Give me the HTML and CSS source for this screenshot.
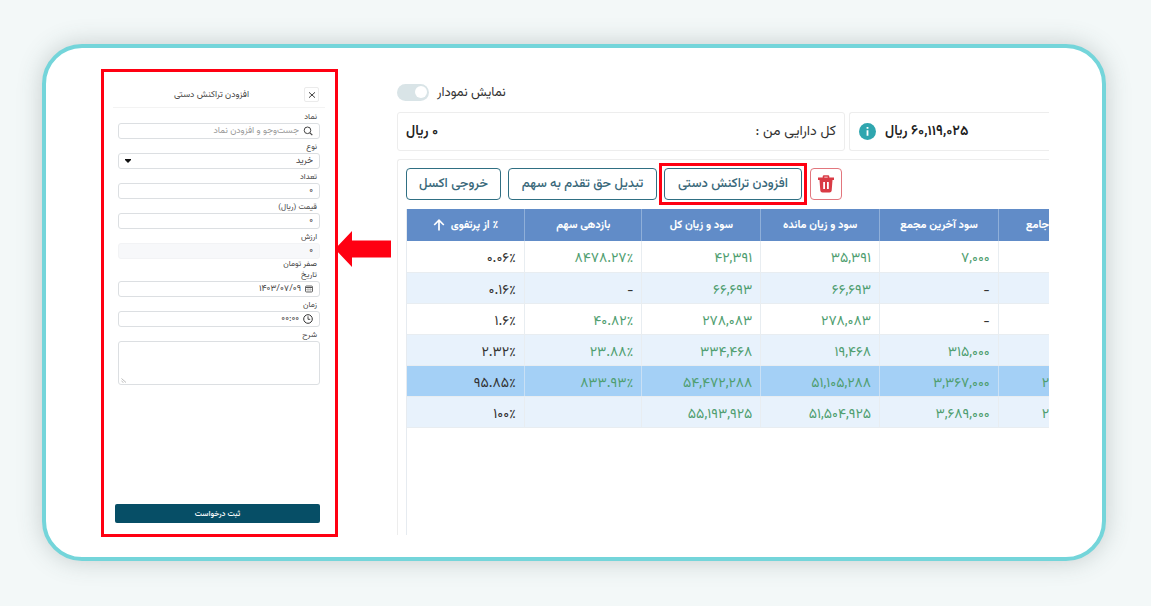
FILE: index.html
```html
<!DOCTYPE html>
<html lang="fa">
<head>
<meta charset="utf-8">
<meta name="viewport" content="width=device-width, initial-scale=1">
<title>افزودن تراکنش دستی</title>
<link rel="stylesheet" href="styles.css">
</head>
<body>
<main class="card">
  <form class="entry" dir="rtl">
    <header class="entry-head">
      <button class="close" type="button" aria-label="بستن">
        <svg viewBox="0 0 8 8" width="8" height="8"><path d="M1 1.300 7 6.700M7 1.300 1 6.700" stroke="#444" stroke-width="1" fill="none"/></svg>
      </button>
      <h1 class="entry-title">افزودن تراکنش دستی</h1>
    </header>
    <div class="fields">
      <div class="field">
        <label for="symbol">نماد</label>
        <div class="control">
          <svg viewBox="0 0 10 10" width="10" height="10"><circle cx="4.500" cy="4.300" r="3.300" fill="none" stroke="#444" stroke-width="1"/><path d="M7 6.800 9.300 9.200" stroke="#444" stroke-width="1.200"/></svg>
          <input id="symbol" type="text" placeholder="جست‌وجو و افزودن نماد">
        </div>
      </div>
      <div class="field">
        <label for="kind">نوع</label>
        <div class="control">
          <select id="kind"><option>خرید</option></select>
          <svg viewBox="0 0 6 4" width="6" height="4"><path d="M0 0H6V1L3 4 0 1Z" fill="#111"/></svg>
        </div>
      </div>
      <div class="field">
        <label for="count">تعداد</label>
        <div class="control"><input id="count" type="text" value="۰"></div>
      </div>
      <div class="field">
        <label for="price">قیمت (ریال)</label>
        <div class="control"><input id="price" type="text" value="۰"></div>
      </div>
      <div class="field">
        <label for="value">ارزش</label>
        <div class="control readonly"><input id="value" type="text" value="۰" readonly></div>
        <p class="hint">صفر تومان</p>
      </div>
      <div class="field">
        <label for="date">تاریخ</label>
        <div class="control">
          <svg viewBox="0 0 8 8" width="8" height="8"><rect x=".5" y="1" width="7" height="6" rx="1" fill="none" stroke="#555" stroke-width=".9"/><path d="M1 2.500H7" stroke="#555"/><path d="M1 4.700H7M3 3V7M5.200 3V7" stroke="#999" stroke-width=".6"/></svg>
          <input id="date" type="text" value="۱۴۰۳/۰۷/۰۹">
        </div>
      </div>
      <div class="field">
        <label for="time">زمان</label>
        <div class="control">
          <svg viewBox="0 0 10 10" width="10" height="10"><circle cx="5" cy="5" r="4.300" fill="none" stroke="#333"/><path d="M5 2.300V5.300H7.200" fill="none" stroke="#333" stroke-width=".9"/></svg>
          <input id="time" type="text" value="۰۰:۰۰">
        </div>
      </div>
      <div class="field">
        <label for="note">شرح</label>
        <div class="note-box">
          <textarea id="note"></textarea>
          <svg class="grip" viewBox="0 0 6 5" width="6" height="5"><path d="M.5 .5 5 4.500M.5 3 2.500 4.700" stroke="#aaa" stroke-width=".8" fill="none"/></svg>
        </div>
      </div>
    </div>
    <button class="submit" type="button">ثبت درخواست</button>
  </form>

  <svg class="arrow" viewBox="0 0 56 36" width="56" height="36" aria-hidden="true"><path d="M0 18 17 0V9.500H56V26.500H17V36Z" fill="#ff0012"/></svg>

  <section class="portfolio">
    <div class="chart-toggle">
      <input id="chart" class="switch" type="checkbox" role="switch">
      <label for="chart" dir="rtl">نمایش نمودار</label>
    </div>
    <div class="summary">
      <div class="tile tile-total">
        <strong dir="rtl">۰ ریال</strong>
        <span dir="rtl">کل دارایی من :</span>
      </div>
      <div class="tile tile-value">
        <svg viewBox="0 0 17 17" width="17" height="17"><circle cx="8.500" cy="8.500" r="8.500" fill="#2fa6af"/><path d="M8.500 7.200V12.800M8.500 4V5.800" stroke="#fff" stroke-width="1.800"/></svg>
        <strong dir="rtl">۶۰,۱۱۹,۰۲۵ ریال</strong>
      </div>
    </div>
    <div class="holdings">
      <div class="actions">
        <button class="btn btn-export" type="button" dir="rtl">خروجی اکسل</button>
        <button class="btn btn-convert" type="button" dir="rtl">تبدیل حق تقدم به سهم</button>
        <div class="highlight"><button class="btn btn-add" type="button" dir="rtl">افزودن تراکنش دستی</button></div>
        <button class="btn btn-delete" type="button" aria-label="حذف">
          <svg viewBox="0 0 16 18" width="16" height="18"><path d="M5.500 3V1.500Q5.500 1 6 1H10Q10.500 1 10.500 1.500V3" fill="none" stroke="#d93b45" stroke-width="1.600"/><path fill-rule="evenodd" d="M0 2.500H16V5H14.500L13.700 15.500Q13.500 17.500 11.500 17.500H4.500Q2.500 17.500 2.300 15.500L1.500 5H0ZM5.200 7V14H7V7ZM9 7V14H10.800V7Z" fill="#d93b45"/></svg>
        </button>
      </div>
      <div class="grid">
        <table>
          <colgroup><col class="c-a"><col class="c-a"><col class="c-b"><col class="c-b"><col class="c-b"><col></colgroup>
          <thead>
            <tr>
              <th><span class="sorted"><svg viewBox="0 0 12 12" width="12" height="12"><path d="M6 11.500V1.500M1.200 6 6 1.200 10.800 6" fill="none" stroke="#fff" stroke-width="1.700"/></svg><span dir="rtl">٪ از پرتفوی</span></span></th>
              <th dir="rtl">بازدهی سهم</th>
              <th dir="rtl">سود و زیان کل</th>
              <th dir="rtl">سود و زیان مانده</th>
              <th dir="rtl">سود آخرین مجمع</th>
              <th class="cut-head">جامع</th>
            </tr>
          </thead>
          <tbody>
            <tr><td class="share">۰.۰۶٪</td><td>۸۴۷۸.۲۷٪</td><td>۴۲,۳۹۱</td><td>۳۵,۳۹۱</td><td>۷,۰۰۰</td><td></td></tr>
            <tr class="even"><td class="share">۰.۱۶٪</td><td class="none">-</td><td>۶۶,۶۹۳</td><td>۶۶,۶۹۳</td><td class="none">-</td><td></td></tr>
            <tr><td class="share">۱.۶٪</td><td>۴۰.۸۲٪</td><td>۲۷۸,۰۸۳</td><td>۲۷۸,۰۸۳</td><td class="none">-</td><td></td></tr>
            <tr class="even"><td class="share">۲.۳۲٪</td><td>۲۳.۸۸٪</td><td>۳۳۴,۴۶۸</td><td>۱۹,۴۶۸</td><td>۳۱۵,۰۰۰</td><td></td></tr>
            <tr class="selected"><td class="share">۹۵.۸۵٪</td><td>۸۳۳.۹۳٪</td><td>۵۴,۴۷۲,۲۸۸</td><td>۵۱,۱۰۵,۲۸۸</td><td>۳,۳۶۷,۰۰۰</td><td class="cut">۲</td></tr>
            <tr class="even"><td class="share">۱۰۰٪</td><td></td><td>۵۵,۱۹۳,۹۲۵</td><td>۵۱,۵۰۴,۹۲۵</td><td>۳,۶۸۹,۰۰۰</td><td class="cut">۲</td></tr>
          </tbody>
        </table>
      </div>
    </div>
  </section>
</main>
</body>
</html>
```
FILE: styles.css
```css
* { box-sizing: border-box; }

body {
  margin: 0;
  min-height: 100vh;
  display: flex;
  padding: 44px 45px 45px 42px;
  background: #f3f8f8;
  font-family: "Vazirmatn", "Noto Sans Arabic", "DejaVu Sans", sans-serif;
  color: #333;
}

button, input, select, textarea { font-family: inherit; }
svg { flex: none; display: block; }

.card {
  flex: 1;
  min-width: 0;
  display: flex;
  padding: 21px 53px 22px 55px;
  background: #fff;
  border: 4px solid #74d5da;
  border-radius: 40px;
  box-shadow: 0 0 24px rgba(60, 80, 80, 0.25);
}

/* Transaction form */
.entry {
  flex: none;
  width: 237px;
  display: flex;
  flex-direction: column;
  margin-bottom: -2px;
  padding: 10px 10px 11px 9px;
  border: 3px solid #ff0012;
  font-size: 8px;
  color: #444;
}

.entry-head {
  display: flex;
  align-items: center;
  height: 26px;
  padding: 0 6px;
  border-bottom: 1px solid #f3f3f3;
}

.entry-title {
  flex: 1;
  margin: 0;
  text-align: center;
  font-size: 9px;
  font-weight: 400;
}

.close {
  display: flex;
  align-items: center;
  justify-content: center;
  width: 15px;
  height: 15px;
  padding: 0;
  background: #fff;
  border: 1px solid #ebebeb;
  border-radius: 2px;
}

.fields { padding: 3px 5px 0; }
.field { margin-bottom: 2px; }

.field label {
  display: block;
  height: 12px;
  padding: 0 3px;
  line-height: 12px;
}

.control {
  display: flex;
  align-items: center;
  gap: 4px;
  height: 16px;
  padding: 0 6px;
  border: 1px solid #dcdfe2;
  border-radius: 3px;
}

.control input, .control select {
  flex: 1;
  min-width: 0;
  height: 14px;
  padding: 0;
  border: 0;
  outline: 0;
  background: transparent;
  appearance: none;
  font-size: 9px;
  color: #444;
}

.control input::placeholder { color: #999; }
.control.readonly { background: #f7f8fa; border-color: #f2f3f5; }

.hint {
  height: 10px;
  margin: 0 0 -2px;
  padding: 0 3px;
  line-height: 10px;
}

.note-box { display: grid; }
.note-box > * { grid-area: 1 / 1; }

.note-box textarea {
  display: block;
  width: 100%;
  height: 44px;
  border: 1px solid #dcdfe2;
  border-radius: 3px;
  resize: none;
  font-size: 9px;
}

.grip { place-self: end; margin: 0 0 2px 3px; }

.submit {
  height: 19px;
  margin: auto 5px 0 2px;
  padding: 0;
  border: 0;
  border-radius: 2px;
  background: #064e66;
  color: #fff;
  font-size: 8px;
  font-weight: 500;
}

.arrow { align-self: flex-start; margin: 162px 6px 0 -3px; }

/* Portfolio view */
.portfolio {
  flex: 1;
  min-width: 0;
  overflow: hidden;
  display: flex;
  flex-direction: column;
  padding-top: 11px;
  font-size: 14px;
}

.chart-toggle {
  display: flex;
  align-items: center;
  gap: 8px;
  height: 24px;
  margin-bottom: 8px;
  font-size: 13px;
}

.chart-toggle label { padding-top: 2px; }

.switch {
  appearance: none;
  display: flex;
  align-items: center;
  justify-content: flex-end;
  width: 32px;
  height: 17px;
  margin: 0;
  padding: 0 2px;
  border-radius: 9px;
  background: #d9e4e7;
}

.switch::before {
  content: "";
  width: 12px;
  height: 12px;
  border-radius: 50%;
  background: #fff;
}

.summary {
  display: grid;
  grid-template-columns: 448fr 200fr;
  gap: 4px;
  height: 39px;
  margin-bottom: 8px;
}

.tile {
  display: flex;
  align-items: center;
  min-width: 0;
  padding: 0 8px;
  border: 1px solid #ededed;
  border-radius: 3px;
  white-space: nowrap;
}

.tile strong { color: #222; font-weight: 600; }
.tile-total { justify-content: space-between; }
.tile-value {
  gap: 9px;
  padding-left: 9px;
  border-right: 0;
  border-radius: 3px 0 0 3px;
}

.holdings {
  flex: 1;
  display: flex;
  flex-direction: column;
  padding: 8px 0 0 8px;
  border: 1px solid #ededed;
  border-width: 1px 0 0 1px;
  border-radius: 3px 0 0 0;
}

.actions { display: flex; gap: 7px; height: 32px; margin-bottom: 9px; }

.btn {
  height: 32px;
  padding: 0;
  background: #fff;
  border: 1px solid #2f6f83;
  border-radius: 4px;
  color: #39687a;
  font-size: 13px;
  font-weight: 500;
  white-space: nowrap;
}

.btn-export { width: 95px; }
.btn-convert { width: 149px; }
.btn-add { display: block; width: 138px; }
.highlight { outline: 3px solid #ff0012; outline-offset: 2px; z-index: 1; }
.btn-delete {
  display: flex;
  align-items: center;
  justify-content: center;
  width: 32px;
  margin-left: 1px;
  border-color: #e2767d;
}

.grid { flex: 1; border-left: 1px solid #e6ebf0; }

table { width: 100%; border-collapse: collapse; table-layout: fixed; }
.c-a { width: 18.3%; }
.c-b { width: 18.5%; }

th {
  height: 32px;
  padding: 0;
  background: #618cc8;
  border-right: 1px solid #8fafd9;
  color: #fff;
  font-size: 11px;
  font-weight: 700;
  white-space: nowrap;
}

.sorted { display: flex; align-items: center; justify-content: center; gap: 6px; }

td {
  height: 31px;
  padding: 6px 8px 0 0;
  border-right: 1px solid #e8edf1;
  border-bottom: 1px solid #e8edf1;
  color: #4f9e70;
  line-height: 22px;
  text-align: right;
  white-space: nowrap;
}

th:last-child, td:last-child { border-right: 0; }
.share, .none { color: #333; }
.even td { background: #e8f2fc; }
.selected td { background: #a4d0f6; border-right-color: #c9e0f5; }
.cut-head { text-align: right; }
td.cut { padding-right: 0; }
```
